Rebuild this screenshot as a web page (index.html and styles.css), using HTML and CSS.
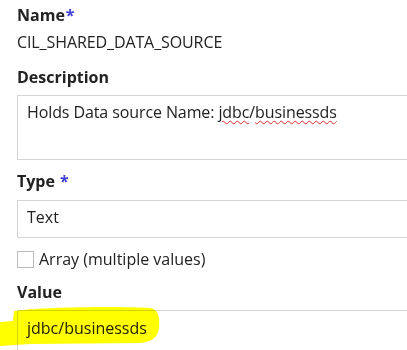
FILE: index.html
```html
<!DOCTYPE html>
<html>
<head>
<meta charset="utf-8">
<link rel="stylesheet" href="styles.css">
</head>
<body>
<div class="form">
  <div class="field">
    <div class="label">Name<span class="req">*</span></div>
    <div class="static">CIL_SHARED_DATA_SOURCE</div>
  </div>
  <div class="field">
    <div class="label">Description</div>
    <div class="box textarea">Holds Data source Name: <span class="spell">jdbc</span>/<span class="spell">businessds</span></div>
  </div>
  <div class="field">
    <div class="label">Type <span class="req">*</span></div>
    <div class="box input">Text</div>
    <div class="check-row"><span class="checkbox"></span><span class="check-label">Array (multiple values)</span></div>
  </div>
  <div class="field">
    <div class="label">Value</div>
    <div class="box input value">jdbc/businessds</div>
  </div>
</div>
<svg class="marker" width="170" height="50" viewBox="0 0 170 50">
  <path d="M0 16 L13 15 L14 5 C40 1 120 0 150 2 C158 3 160 10 159 22 C158 32 150 36 140 37 L30 38 L0 40 Z" fill="#ffff00"/>
</svg>
</body>
</html>
```
FILE: styles.css
```css
html, body {
  margin: 0;
  padding: 0;
  background: #ffffff;
  overflow: hidden;
}
body {
  width: 407px;
  height: 350px;
  position: relative;
  font-family: "Open Sans", "Noto Sans", sans-serif;
  color: #222;
}
.form {
  padding: 4px 0 0 17px;
  width: 420px;
}
.label {
  font-weight: 700;
  font-size: 16px;
  line-height: 22px;
  color: #222;
}
.req {
  color: #3c3cd6;
  margin-left: 1px;
}
.static {
  font-size: 16px;
  line-height: 22px;
  margin-top: 5px;
  margin-bottom: 13px;
  letter-spacing: -0.1px;
}
.box {
  margin-top: 7px;
  border: 1px solid #d4d4d4;
  border-right: none;
  font-size: 16px;
  line-height: 22px;
  color: #222;
  padding: 5px 0 0 9px;
  box-sizing: border-box;
}
.textarea {
  height: 65px;
  margin-bottom: 10px;
  letter-spacing: -0.1px;
}
.spell {
  text-decoration: underline wavy #e03030;
  text-decoration-thickness: 1px;
  text-underline-offset: 2px;
}
.input {
  height: 38px;
  margin-top: 8px;
}
.check-row {
  display: flex;
  align-items: center;
  gap: 5px;
  height: 22px;
  margin-top: 10px;
  margin-bottom: 11px;
  font-size: 16px;
  line-height: 22px;
}
.checkbox {
  width: 17px;
  height: 17px;
  border: 1px solid #bbbbbb;
  box-sizing: border-box;
  display: inline-block;
}
.value {
  height: 45px;
  margin-top: 7px;
  padding-top: 6px;
}
.marker {
  position: absolute;
  left: 0;
  top: 306px;
  mix-blend-mode: multiply;
}
```
